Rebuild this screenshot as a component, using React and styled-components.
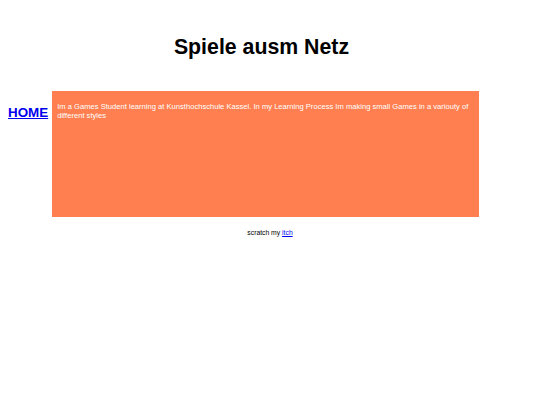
import React from 'react';
import styled, { createGlobalStyle } from 'styled-components';

const GlobalStyle = createGlobalStyle`
  body {
    margin: 8px;
    font-family: "Liberation Sans", Arial, sans-serif;
    background: #ffffff;
    color: #000000;
  }
`;

const Title = styled.h1`
  margin: 27px 0 0;
  padding-right: 17px;
  text-align: center;
  font-size: 21.3px;
  line-height: 24px;
  font-weight: bold;
`;

const Main = styled.div`
  display: flex;
  align-items: flex-start;
  gap: 4px;
  margin-top: 32px;
`;

const Nav = styled.nav`
  padding-top: 12px;
`;

const NavLink = styled.a`
  font-size: 13.4px;
  font-weight: bold;
  color: #0000ee;
  text-decoration: underline;
`;

const InfoBox = styled.section`
  width: 427px;
  height: 126px;
  box-sizing: border-box;
  background: #ff7f50;
  padding: 11px 5px 9px;
`;

const InfoText = styled.p`
  margin: 0;
  color: #ffffff;
  font-size: 7.6px;
  line-height: 9px;
`;

const Footer = styled.footer`
  margin-top: 12px;
  text-align: center;
  font-size: 6.8px;
  line-height: 8px;
`;

const FooterLink = styled.a`
  color: #0000ee;
  text-decoration: underline;
`;

class App extends React.Component {
  render() {
    return (
      <>
        <GlobalStyle />
        <Title>Spiele ausm Netz</Title>
        <Main>
          <Nav>
            <NavLink href="#">HOME</NavLink>
          </Nav>
          <InfoBox>
            <InfoText>
              Im a Games Student learning at Kunsthochschule Kassel. In my Learning Process Im making small Games in a variouty of different styles
            </InfoText>
          </InfoBox>
        </Main>
        <Footer>
          scratch my <FooterLink href="#">itch</FooterLink>
        </Footer>
      </>
    );
  }
}

export default App;
